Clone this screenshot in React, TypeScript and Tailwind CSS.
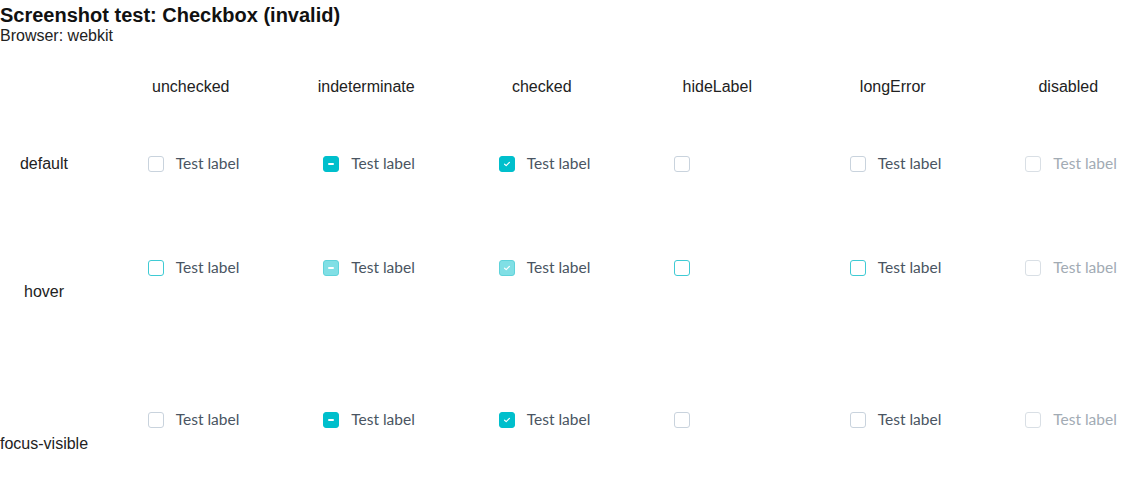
import React from 'react';

type State = 'unchecked' | 'indeterminate' | 'checked';
type Mode = 'default' | 'hover' | 'focus';

const columns = ['unchecked', 'indeterminate', 'checked', 'hideLabel', 'longError', 'disabled'];

// one checkbox box + optional label
const Box: React.FC<{ state: State; mode: Mode; disabled?: boolean }> = ({ state, mode, disabled }) => {
    const hover = mode === 'hover' && !disabled;
    let cls = 'border-[#c9d3dd] bg-white';
    if (disabled) cls = 'border-[#d9dfe5] bg-white';
    else if (state !== 'unchecked') cls = hover ? 'border-[#5fd3da] bg-[#80dfe5]' : 'border-[#00bfcc] bg-[#00bfcc]';
    else if (hover) cls = 'border-[#3fcbd4] bg-white';

    return (
        <span className={`flex h-4 w-4 shrink-0 items-center justify-center rounded-[3px] border ${cls}`}>
            {state === 'indeterminate' && <span className="h-[2px] w-[6px] rounded-full bg-white" />}
            {state === 'checked' && (
                <svg width="8" height="8" viewBox="0 0 8 8" fill="none">
                    <path d="M1.6 4.2 L3.2 5.6 L6.4 2.4" stroke="white" strokeWidth="1.2" strokeLinecap="round" strokeLinejoin="round" />
                </svg>
            )}
        </span>
    );
};

const Cell: React.FC<{ col: string; mode: Mode }> = ({ col, mode }) => {
    const state: State = col === 'indeterminate' ? 'indeterminate' : col === 'checked' ? 'checked' : 'unchecked';
    const disabled = col === 'disabled';
    return (
        <div className="flex justify-center">
            <div className="flex h-5 w-[86px] items-center gap-3 whitespace-nowrap">
                <Box state={state} mode={mode} disabled={disabled} />
                {col !== 'hideLabel' && (
                    <span
                        className={`-mt-[2px] font-['Lato',sans-serif] text-[15.5px] leading-5 ${disabled ? 'text-[#a2abb4]' : 'text-[#4a5562]'}`}
                    >
                        Test label
                    </span>
                )}
            </div>
        </div>
    );
};

const rows: { name: string; mode: Mode; height: string; pad: string }[] = [
    { name: 'default', mode: 'default', height: 'h-[82px]', pad: 'items-center' },
    { name: 'hover', mode: 'hover', height: 'h-[174px]', pad: 'items-start pt-[53px]' },
    { name: 'focus-visible', mode: 'focus', height: 'h-[130px]', pad: 'items-start pt-[31px]' },
];

export default function App() {
    return (
        <div className="min-h-screen overflow-hidden bg-white text-[#111] font-['Liberation_Sans',Arial,sans-serif]">
            <h1 className="pt-[3px] text-[20px] font-bold leading-6">Screenshot test: Checkbox (invalid)</h1>
            <div className="text-[16px] leading-[17px] text-[#222]">Browser: webkit</div>

            <div className="mt-[7px] grid grid-cols-[103px_repeat(6,175.5px)]">
                <div className="h-[72px]" />
                {columns.map((c) => (
                    <div key={c} className="flex h-[72px] items-center justify-center text-[16px] text-[#222]">
                        {c}
                    </div>
                ))}

                {rows.map((r) => (
                    <React.Fragment key={r.name}>
                        <div className={`flex ${r.height} items-center`}>
                            <span className="w-[88px] whitespace-nowrap text-center text-[16px] text-[#222]">{r.name}</span>
                        </div>
                        {columns.map((c) => (
                            <div key={c} className={`flex ${r.height} ${r.pad} justify-center`}>
                                <Cell col={c} mode={r.mode} />
                            </div>
                        ))}
                    </React.Fragment>
                ))}
            </div>
        </div>
    );
}
